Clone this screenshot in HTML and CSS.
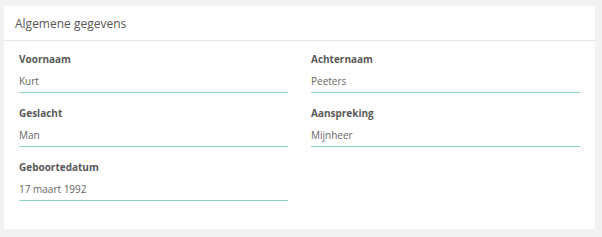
FILE: index.html
```html
<!DOCTYPE html>
<html lang="nl">
<head>
    <meta charset="UTF-8">
    <meta name="viewport" content="width=device-width, initial-scale=1.0">
    <title>Algemene gegevens</title>
    <link rel="stylesheet" href="styles.css">
</head>
<body>
    <div class="panel">
        <div class="panel-heading">Algemene gegevens</div>
        <div class="panel-body">
            <div class="field">
                <label>Voornaam</label>
                <div class="value">Kurt</div>
            </div>
            <div class="field">
                <label>Achternaam</label>
                <div class="value">Peeters</div>
            </div>
            <div class="field">
                <label>Geslacht</label>
                <div class="value">Man</div>
            </div>
            <div class="field">
                <label>Aanspreking</label>
                <div class="value">Mijnheer</div>
            </div>
            <div class="field">
                <label>Geboortedatum</label>
                <div class="value">17 maart 1992</div>
            </div>
        </div>
    </div>
</body>
</html>
```

FILE: styles.css
```css
body {
    margin: 0;
    padding: 6px 7px 8px 4px;
    background-color: #f2f2f2;
    font-family: 'Open Sans', 'Noto Sans', sans-serif;
    color: #555;
}
.panel {
    background-color: #ffffff;
}
.panel-heading {
    height: 35px;
    line-height: 34px;
    padding: 1px 11px 0;
    font-size: 12px;
    color: #555;
    border-bottom: 1px solid #e6e6e6;
    box-sizing: border-box;
}
.panel-body {
    display: grid;
    grid-template-columns: 1fr 1fr;
    column-gap: 23px;
    padding: 11px 15px 15px;
}
.field {
    margin-bottom: 13px;
}
label {
    display: block;
    font-size: 10px;
    font-weight: 700;
    line-height: 14px;
    color: #595959;
    margin-bottom: 3px;
}
.value {
    font-size: 10px;
    line-height: 14px;
    color: #666;
    padding: 5px 0 4px;
    border-bottom: 1px solid #8cd3c1;
}
```
